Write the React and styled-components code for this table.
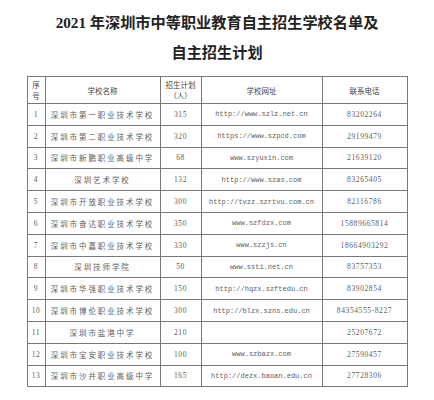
import React from "react";
import styled, { createGlobalStyle } from "styled-components";

const rows = [
   ["1", "深圳市第一职业技术学校", "315", "http://www.szlz.net.cn", "83202264"],
   ["2", "深圳市第二职业技术学校", "320", "https://www.szpcd.com", "29199479"],
   ["3", "深圳市新鹏职业高级中学", "68", "www.szyuxin.com", "21639120"],
   ["4", "深圳艺术学校", "132", "http://www.szas.com", "83265405"],
   ["5", "深圳市开放职业技术学校", "300", "http://tvzz.szrtvu.com.cn", "82116786"],
   ["6", "深圳市奋达职业技术学校", "350", "www.szfdzx.com", "15889665814"],
   ["7", "深圳市中嘉职业技术学校", "330", "www.szzjs.cn", "18664903292"],
   ["8", "深圳技师学院", "50", "www.ssti.net.cn", "83757353"],
   ["9", "深圳市华强职业技术学校", "150", "http://hqzx.szftedu.cn", "83902854"],
   ["10", "深圳市博伦职业技术学校", "300", "http://blzx.szns.edu.cn", "84354555-8227"],
   ["11", "深圳市盐港中学", "210", "", "25207672"],
   ["12", "深圳市宝安职业技术学校", "100", "www.szbazx.com", "27590457"],
   ["13", "深圳市沙井职业高级中学", "165", "http://dezx.baoan.edu.cn", "27728306"],
];

const App = () => {
   return (
      <Page>
         <GlobalStyle />
         <Title>
            <div>2021 年深圳市中等职业教育自主招生学校名单及</div>
            <div>自主招生计划</div>
         </Title>
         <Table>
            <colgroup>
               <col style={{ width: 18 }} />
               <col style={{ width: 115 }} />
               <col style={{ width: 41 }} />
               <col style={{ width: 121 }} />
               <col style={{ width: 85 }} />
            </colgroup>
            <thead>
               <tr>
                  <Th>
                     序<br />号
                  </Th>
                  <Th>学校名称</Th>
                  <Th>
                     招生计划
                     <br />
                     （人）
                  </Th>
                  <Th>学校网址</Th>
                  <Th>联系电话</Th>
               </tr>
            </thead>
            <tbody>
               {rows.map((r) => (
                  <tr key={r[0]}>
                     <Td $kind="num">{r[0]}</Td>
                     <Td $kind="name">{r[1]}</Td>
                     <Td $kind="num">{r[2]}</Td>
                     <Td $kind="url">{r[3]}</Td>
                     <Td $kind="num">{r[4]}</Td>
                  </tr>
               ))}
            </tbody>
         </Table>
      </Page>
   );
};

export default App;

const GlobalStyle = createGlobalStyle`
   html, body {
      margin: 0;
      padding: 0;
      background: #fff;
   }
`;

const Page = styled.div`
   width: 434px;
   height: 400px;
   overflow: hidden;
   background: #fff;
`;

const Title = styled.div`
   padding-top: 8px;
   height: 68px;
   font-family: "Liberation Serif", "Noto Sans CJK SC", serif;
   font-size: 15.2px;
   font-weight: 700;
   line-height: 30px;
   color: #222;
   text-align: center;
`;

const Table = styled.table`
   width: 380px;
   margin: 0 auto;
   border-collapse: collapse;
   table-layout: fixed;
   border: 1.5px solid #6a6a6a;
`;

const Th = styled.th`
   height: 26px;
   padding: 0;
   border: 1px solid #777;
   font-family: "Noto Sans CJK SC", sans-serif;
   font-size: 7.5px;
   font-weight: 400;
   line-height: 11px;
   color: #444;
   text-align: center;
   vertical-align: middle;
`;

const Td = styled.td`
   height: 20.8px;
   padding: 0;
   border: 1px solid #777;
   text-align: center;
   vertical-align: middle;
   white-space: nowrap;
   overflow: hidden;
   color: #5e5e5e;
   font-family: ${(p) =>
      p.$kind === "name"
         ? `"Noto Sans CJK SC", sans-serif`
         : p.$kind === "url"
         ? `"Liberation Mono", monospace`
         : `"Liberation Serif", serif`};
   font-size: ${(p) => (p.$kind === "url" ? "7px" : "7.5px")};
   letter-spacing: ${(p) =>
      p.$kind === "name" ? "1.9px" : p.$kind === "num" ? "0.6px" : "0"};
`;
